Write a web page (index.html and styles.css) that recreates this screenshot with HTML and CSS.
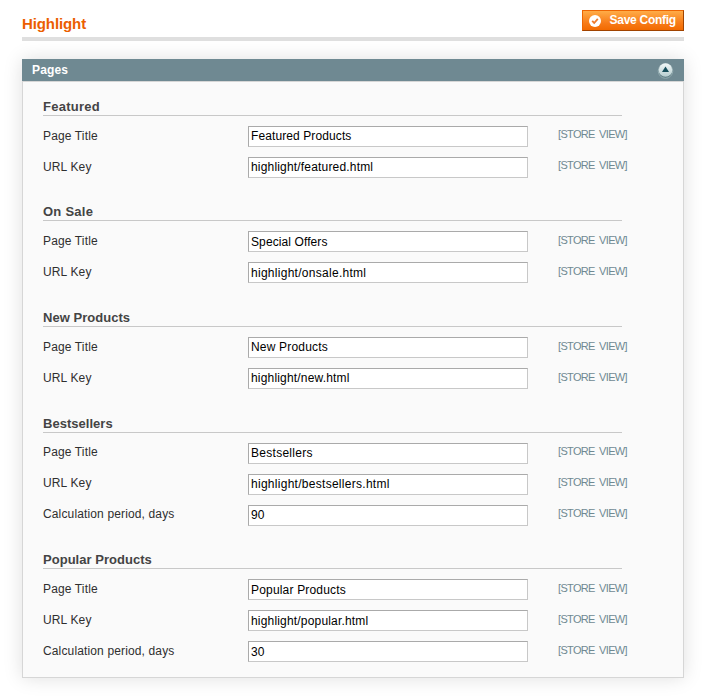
FILE: index.html
```html
<!DOCTYPE html>
<html lang="en">
<head>
<meta charset="utf-8">
<title>Highlight</title>
<link rel="stylesheet" href="styles.css">
</head>
<body>
<header class="content-header">
  <h1>Highlight</h1>
  <button class="save" type="button">
    <svg width="12" height="12" viewBox="0 0 12 12"><circle cx="6" cy="6" r="6" fill="#fff"/><path d="M3.2 5.8L5.2 8L8.8 3.8" fill="none" stroke="#ee7a2b" stroke-width="1.8"/></svg>
    <span>Save Config</span>
  </button>
</header>
<main class="panel">
  <div class="panel-head">
    <h2>Pages</h2>
    <svg width="17" height="17" viewBox="0 0 17 17"><defs><linearGradient id="ball" x2="0" y2="1"><stop offset="0" stop-color="#f2f8f8"/><stop offset="1" stop-color="#b5cccf"/></linearGradient></defs><circle cx="8.5" cy="9" r="7.3" fill="#5e7c84" stroke="#93abb0"/><circle cx="8.5" cy="8" r="6.8" fill="url(#ball)"/><path d="M8.5 4.5L12 10H5Z" fill="#174e5b"/></svg>
  </div>
  <div class="panel-body">
    <section>
      <h3 class="wide">Featured</h3>
      <div class="row"><label for="f1">Page Title</label><input id="f1" value="Featured Products"><span class="scope">[STORE VIEW]</span></div>
      <div class="row"><label for="f2">URL Key</label><input id="f2" class="path" value="highlight/featured.html"><span class="scope">[STORE VIEW]</span></div>
    </section>
    <section>
      <h3 class="wide">On Sale</h3>
      <div class="row"><label for="s1">Page Title</label><input id="s1" value="Special Offers"><span class="scope">[STORE VIEW]</span></div>
      <div class="row"><label for="s2">URL Key</label><input id="s2" class="long" value="highlight/onsale.html"><span class="scope">[STORE VIEW]</span></div>
    </section>
    <section>
      <h3>New Products</h3>
      <div class="row"><label for="n1">Page Title</label><input id="n1" class="path" value="New Products"><span class="scope">[STORE VIEW]</span></div>
      <div class="row"><label for="n2">URL Key</label><input id="n2" class="path" value="highlight/new.html"><span class="scope">[STORE VIEW]</span></div>
    </section>
    <section>
      <h3>Bestsellers</h3>
      <div class="row"><label for="b1">Page Title</label><input id="b1" class="long" value="Bestsellers"><span class="scope">[STORE VIEW]</span></div>
      <div class="row"><label for="b2">URL Key</label><input id="b2" class="long" value="highlight/bestsellers.html"><span class="scope">[STORE VIEW]</span></div>
      <div class="row"><label for="b3">Calculation period, days</label><input id="b3" value="90"><span class="scope">[STORE VIEW]</span></div>
    </section>
    <section>
      <h3>Popular Products</h3>
      <div class="row"><label for="p1">Page Title</label><input id="p1" class="path" value="Popular Products"><span class="scope">[STORE VIEW]</span></div>
      <div class="row"><label for="p2">URL Key</label><input id="p2" class="path" value="highlight/popular.html"><span class="scope">[STORE VIEW]</span></div>
      <div class="row"><label for="p3">Calculation period, days</label><input id="p3" value="30"><span class="scope">[STORE VIEW]</span></div>
    </section>
  </div>
</main>
</body>
</html>
```
FILE: styles.css
```css
* { box-sizing: border-box; }
body {
  margin: 0;
  min-height: 697px;
  padding: 10px 21px 0 22px;
  background: #fff;
  font: 12px/15px "Liberation Sans", Arial, sans-serif;
  color: #2f2f2f;
}
h1, h2, h3 { margin: 0; }
.content-header {
  display: flex;
  justify-content: space-between;
  align-items: flex-start;
  height: 31px;
  border-bottom: 4px solid #dfdfdf;
}
h1 { padding-top: 4px; font-size: 15px; line-height: 20px; letter-spacing: -.1px; color: #eb5e00; }
.save {
  display: flex;
  align-items: center;
  gap: 8.5px;
  width: 102px;
  height: 21px;
  padding: 0 0 0 6px;
  border: 1px solid;
  border-color: #ed6502 #a04300 #a04300 #ed6502;
  background: linear-gradient(#ffac47, #f77a17 65%, #f26a00);
  color: #fff;
  font: bold 12px/15px "Liberation Sans", Arial, sans-serif;
  letter-spacing: -.27px;
  white-space: nowrap;
}
.save svg { flex: none; }
.panel { margin-top: 18px; box-shadow: 0 0 18px rgba(0, 0, 0, .13); }
.panel-head {
  display: flex;
  justify-content: space-between;
  align-items: center;
  height: 22px;
  padding: 0 10px;
  background: #6f8992;
}
h2 { font-size: 12px; line-height: 22px; letter-spacing: .15px; color: #fff; }
.panel-body {
  height: 597px;
  padding: 12.8px 20px 0;
  border: 1px solid #d6d6d6;
  background: #fafafa;
}
section { margin-bottom: 12.6px; }
h3 {
  width: 579px;
  height: 21px;
  margin-bottom: 10px;
  border-bottom: 1px solid #c8c8c8;
  font-size: 13px;
  line-height: 23.8px;
  color: #444;
  letter-spacing: .03px;
}
h3.wide { letter-spacing: .25px; }
.row {
  display: grid;
  grid-template-columns: 205px 280px 1fr;
  height: 31px;
}
.row label { padding-top: 2.9px; letter-spacing: .14px; }
input {
  width: 280px;
  height: 21px;
  margin: 0;
  padding: 0 2px;
  border: 1px solid;
  border-color: #aaa #c8c8c8 #c8c8c8 #aaa;
  background: #fff;
  color: #000;
  font: 12px "Liberation Sans", Arial, sans-serif;
  letter-spacing: .1px;
}
input.path { letter-spacing: .18px; }
input.long { letter-spacing: .28px; }
.scope { padding: 1.6px 0 0 30px; font-size: 11px; letter-spacing: -.67px; word-spacing: 2px; color: #6f8992; }
```
